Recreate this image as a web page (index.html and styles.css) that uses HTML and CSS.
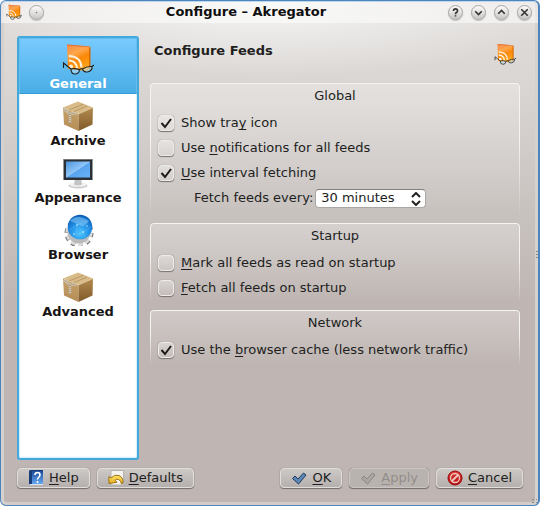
FILE: index.html
```html
<!DOCTYPE html>
<html lang="en">
<head>
<meta charset="utf-8">
<title>Configure – Akregator</title>
<link rel="stylesheet" href="styles.css">
</head>
<body>
<svg class="defs" aria-hidden="true">
  <defs>
    <linearGradient id="orange" x1="0" y1="0" x2="0.4" y2="1"><stop offset="0" stop-color="#f58a45"/><stop offset=".4" stop-color="#ffa64c"/><stop offset=".65" stop-color="#fa8806"/><stop offset="1" stop-color="#ffa31e"/></linearGradient>
    <linearGradient id="boxl" x1="0" y1="0" x2="0" y2="1"><stop offset="0" stop-color="#c6a26b"/><stop offset="1" stop-color="#b48d55"/></linearGradient>
    <linearGradient id="boxr" x1="0" y1="0" x2="0" y2="1"><stop offset="0" stop-color="#b28a50"/><stop offset="1" stop-color="#805a28"/></linearGradient>
    <linearGradient id="screen" x1="0" y1="0" x2="1" y2="1"><stop offset="0" stop-color="#4d96dc"/><stop offset=".5" stop-color="#8fc6f8"/><stop offset=".52" stop-color="#58a4ee"/><stop offset="1" stop-color="#69b0fa"/></linearGradient>
    <radialGradient id="globe" cx=".5" cy=".75" r=".75"><stop offset="0" stop-color="#50c4ff"/><stop offset=".5" stop-color="#2393e8"/><stop offset="1" stop-color="#0b5cb4"/></radialGradient>
    <linearGradient id="book" x1="0" y1="0" x2="0" y2="1"><stop offset="0" stop-color="#1c4c9c"/><stop offset="1" stop-color="#66a8f2"/></linearGradient>
    <linearGradient id="gold" x1="0" y1="0" x2="0" y2="1"><stop offset="0" stop-color="#ffe868"/><stop offset="1" stop-color="#e8a91c"/></linearGradient>
    <linearGradient id="red" x1="0" y1="0" x2="0" y2="1"><stop offset="0" stop-color="#e23a32"/><stop offset="1" stop-color="#b80d0d"/></linearGradient>
    <symbol id="feed" viewBox="0 0 32 32">
      <path d="M5 1.500 28 3.500v22.500L24 28 6 26Z" fill="url(#orange)"/>
      <path d="M5 1.500 28 3.500l-1 .8L5.500 2.500Z" fill="#e0703a"/>
      <path d="M27 4.500 28.500 4v22l-1.500.8Z" fill="#d76a05"/>
      <path d="M7 17.500q7.500.5 8 8M7 13q12 .5 12.500 11.500" fill="none" stroke="#fff1df" stroke-width="2"/>
      <circle cx="9" cy="23.500" r="2" fill="#fff1df"/>
      <g fill="#bce2f5" fill-opacity=".55" stroke="#22211f" stroke-width="1.100">
        <path d="M9 26q4.500-1 8.500.8-.5 4.200-4.500 4.200Q9 31 9 26ZM20.500 26q4.500-3 9.500-2.500.5 4.500-4.500 5.500-4 .3-5-3Z"/>
        <path d="M17.500 26.800q1-1.500 3-.8M9 26 1.500 20v5M30 23.500l2-1.500" fill="none"/>
      </g>
    </symbol>
    <symbol id="carton" viewBox="0 0 32 32">
      <path d="m1 7.500 15-6 15 6-14.500 6.500Z" fill="#d8bb88"/>
      <path d="m1 7.500 15.500 6.500v17L2 24.500Z" fill="url(#boxl)"/>
      <path d="m31 7.500-14.500 6.500v17L30.500 24.500Z" fill="url(#boxr)"/>
      <path d="m6.500 10.200 15-6M11 12l14-6" stroke="#b08f5c" stroke-width=".8" fill="none"/>
      <path d="M1.500 8.500 8 14l7-1M8 14v9" stroke="#d2c7b3" stroke-width="2.300" fill="none"/>
      <path d="M1.500 8.500 8 14l7-1M8 14v9" stroke="#8c806c" stroke-width="1" stroke-dasharray="1 1" fill="none"/>
      <path d="m1 7.500 15.500 6.500L31 7.500" stroke="#e4cb9c" stroke-width=".7" fill="none"/>
    </symbol>
    <symbol id="monitor" viewBox="0 0 32 32">
      <ellipse cx="16" cy="28.500" rx="9.500" ry="3" fill="#c9c9c9"/><ellipse cx="16" cy="27.500" rx="8.500" ry="2.300" fill="#f1f1f1"/>
      <path d="M13 22h6l1 5.500q-4 2-8 0Z" fill="#c4c4c4"/>
      <path d="M1.500 2h29v21h-29Z" fill="#2b3036"/><path d="M2 2.500h28" stroke="#777"/>
      <path d="M4 4.500h24v16H4Z" fill="url(#screen)"/>
    </symbol>
    <symbol id="world" viewBox="0 0 32 32">
      <circle cx="17" cy="19" r="12.500" fill="none" stroke="#77797a" stroke-width="4" stroke-dasharray="4 3.850"/>
      <circle cx="17" cy="18.500" r="11.500" fill="none" stroke="#dcdcdc" stroke-width="4" stroke-dasharray="4.200 3.020"/>
      <circle cx="17" cy="18" r="11.500" fill="#b9bbbc"/>
      <circle cx="18" cy="13" r="12.300" fill="url(#globe)"/>
      <path d="M8 7q7-8 19 0-4 6-8 5-5-3-11-5Z" fill="#8bcdfa" fill-opacity=".55"/>
      <path d="m7 16 8-5 6 7 8-5M15 11l-1 11 7-4 2 5M15 11l9-4" fill="none" stroke="#9ee2ff" stroke-opacity=".35" stroke-width=".6"/>
      <g fill="#d7f5ff"><circle cx="15" cy="11" r=".8"/><circle cx="21" cy="18" r=".8"/><circle cx="12" cy="20" r=".7"/><circle cx="25" cy="12" r=".7"/></g>
    </symbol>
    <symbol id="tick" viewBox="0 0 16 16"><path d="m1.500 8.500 2.500-2.500 3 3 5.500-6 2.500 2-7.500 9Z" stroke-linejoin="round"/></symbol>
    <symbol id="check" viewBox="0 0 16 16"><path d="m3.500 8 3.500 4 6-8" fill="none" stroke="#1c1a19" stroke-width="2"/></symbol>
  </defs>
</svg>

<main class="window">
  <header class="titlebar">
    <svg class="app-icon"><use href="#feed"/></svg>
    <button class="orb" aria-label="On all desktops"><svg viewBox="0 0 16 16"><circle cx="8" cy="8" r="1"/></svg></button>
    <h1>Configure – Akregator</h1>
    <div class="controls">
      <button class="orb" aria-label="Help"><svg viewBox="0 0 16 16"><path d="M5.500 6q0-2.500 2.500-2.500T10.500 6q0 1-1.500 2-1 .7-1 2M8 11.500V13"/></svg></button>
      <button class="orb" aria-label="Minimize"><svg viewBox="0 0 16 16"><path d="m4 6.500 4 4 4-4"/></svg></button>
      <button class="orb" aria-label="Maximize"><svg viewBox="0 0 16 16"><path d="m4 9.500 4-4 4 4"/></svg></button>
      <button class="orb" aria-label="Close"><svg viewBox="0 0 16 16"><path d="m4 4 8 8m0-8-8 8"/></svg></button>
    </div>
  </header>

  <div class="content">
    <nav class="pages" aria-label="Settings pages">
      <a href="#general" class="page current" aria-current="page"><svg><use href="#feed"/></svg>General</a>
      <a href="#archive" class="page"><svg><use href="#carton"/></svg>Archive</a>
      <a href="#appearance" class="page"><svg><use href="#monitor"/></svg>Appearance</a>
      <a href="#browser" class="page"><svg><use href="#world"/></svg>Browser</a>
      <a href="#advanced" class="page"><svg><use href="#carton"/></svg>Advanced</a>
    </nav>

    <section class="settings">
      <div class="heading"><h2>Configure Feeds</h2><svg><use href="#feed"/></svg></div>
      <section class="group global">
        <h3>Global</h3>
        <label class="option"><span class="box"><input type="checkbox" checked><svg><use href="#check"/></svg></span><span>Show tra<u>y</u> icon</span></label>
        <label class="option"><span class="box"><input type="checkbox"><svg><use href="#check"/></svg></span><span>Use <u>n</u>otifications for all feeds</span></label>
        <label class="option"><span class="box"><input type="checkbox" checked><svg><use href="#check"/></svg></span><span><u>U</u>se interval fetching</span></label>
        <div class="interval">
          <label for="every">Fetch feeds every:</label>
          <span class="combo"><select id="every"><option>30 minutes</option></select><svg viewBox="0 0 10 14"><path d="m1 5 4-4 4 4M1 9l4 4 4-4"/></svg></span>
        </div>
      </section>
      <section class="group startup">
        <h3>Startup</h3>
        <label class="option"><span class="box"><input type="checkbox"><svg><use href="#check"/></svg></span><span><u>M</u>ark all feeds as read on startup</span></label>
        <label class="option"><span class="box"><input type="checkbox"><svg><use href="#check"/></svg></span><span><u>F</u>etch all feeds on startup</span></label>
      </section>
      <section class="group network">
        <h3>Network</h3>
        <label class="option"><span class="box"><input type="checkbox" checked><svg><use href="#check"/></svg></span><span>Use the <u>b</u>rowser cache (less network traffic)</span></label>
      </section>
    </section>
  </div>

  <footer class="actions">
    <button class="action"><svg viewBox="0 0 16 16"><path d="M1 1q0-1 2-1h12v15H3q-2 0-2-1Z" fill="#173c78"/><path d="M4 1h11v13H4Z" fill="url(#book)"/><path d="M1.500 14.500H15" stroke="#dce7f4"/><path d="M7 5q0-2.500 2.500-2.500T12 5q0 1.200-1.500 2.500-1 .8-1 2M9.500 11v2" fill="none" stroke="#fff" stroke-width="1.600"/></svg><span><u>H</u>elp</span></button>
    <button class="action"><svg viewBox="0 0 16 16"><path d="M3 .5h12.500V15H3Z" fill="#f4f3f0" stroke="#b4b0ac"/><path d="M.8 6.500 3 8q3.500-4 8-2.500 4.500 2 4 7.500l-1.500 1q-.5-3.500-3-4.500-2-.7-3.500.8l2 2L1 13.500Z" fill="url(#gold)" stroke="#94680a" stroke-width=".9" stroke-linejoin="round"/></svg><span><u>D</u>efaults</span></button>
    <button class="action first-right"><svg class="blue"><use href="#tick"/></svg><span><u>O</u>K</span></button>
    <button class="action" disabled><svg class="gray"><use href="#tick"/></svg><span><u>A</u>pply</span></button>
    <button class="action"><svg viewBox="0 0 16 16"><circle cx="8" cy="8" r="7" fill="url(#red)" stroke="#970909"/><circle cx="8" cy="8" r="4.500" fill="none" stroke="#eccbc7" stroke-width="1.300"/><path d="m5 11 6-6" stroke="#eccbc7" stroke-width="1.800"/></svg><span><u>C</u>ancel</span></button>
  </footer>
  <span class="grip side"></span>
  <span class="grip corner"></span>
</main>
</body>
</html>
```
FILE: styles.css
```css
* { box-sizing: border-box; }
html { background: #fff; }
body {
  margin: 0;
  font: 13px/16px "DejaVu Sans", sans-serif;
  color: #211e1d;
}
h1, h2, h3 { margin: 0; font-size: 13px; line-height: 16px; }
button, select { font: inherit; color: inherit; margin: 0; }
svg { display: block; flex: none; }
u { text-decoration-thickness: 1px; text-underline-offset: 2px; text-decoration-skip-ink: none; }
.defs { position: absolute; width: 0; height: 0; }

.window {
  position: relative;
  display: flex;
  flex-direction: column;
  min-height: 100vh;
  padding: 0 13px 17px;
  border: solid #4d84bd;
  border-width: 1px 2px 1px 1px;
  border-radius: 6px;
  box-shadow: inset 0 1px #94bce2, inset 3px 0 #d5d1cf, inset -3px 0 #d5d1cf, inset 0 -3px #d2cdcb;
  background:
    radial-gradient(ellipse 300px 76px at 50% 0, #f5f5f4 0, #f5f5f400 100%),
    linear-gradient(#e0dddb 0, #dad6d3 80px, #c7c1be 220px, #bfb6b3 300px);
}

.titlebar {
  display: flex;
  align-items: center;
  height: 22px;
  margin: 0 -13px;
  padding: 0 6px 0 5px;
  background: linear-gradient(#ffffff66, #ffffff88);
  border-radius: 5px 5px 0 0;
}
.titlebar h1 { flex: 1; text-align: center; color: #0f0e0e; }
.app-icon { width: 16px; height: 16px; margin-right: 7px; }
.orb {
  width: 15px;
  height: 15px;
  padding: 0;
  border: 1px solid #a9a6a4;
  border-radius: 50%;
  background: linear-gradient(#fbfbfb, #c9c7c5);
  box-shadow: 0 1px 1px #96939188;
}
.orb svg { width: 13px; height: 13px; fill: none; stroke: #373432; stroke-width: 2; }
.orb circle { fill: #777; stroke: none; }
.controls { display: flex; gap: 8px; }

.content { display: flex; flex: 1; gap: 11px; padding: 13px 5px 8px 3px; }
.pages {
  width: 122px;
  border: 2px solid #43a8dc;
  border-radius: 3px;
  background: #fff;
  box-shadow: inset 0 0 2px #6cc6f2;
}
.page {
  display: flex;
  flex-direction: column;
  align-items: center;
  height: 57px;
  padding-top: 5px;
  color: #171514;
  font-weight: bold;
  text-decoration: none;
}
.page svg { width: 32px; height: 32px; margin-bottom: 1px; }
.page.current {
  height: 56px;
  margin-bottom: 1px;
  color: #fff;
  border: 1px solid #69bdec;
  border-bottom-color: #359bd3;
  padding-top: 4px;
  background: linear-gradient(#78cafe, #49ade6);
}

.settings { flex: 1; min-width: 0; }
.heading { display: flex; justify-content: space-between; align-items: flex-start; height: 47px; padding: 7px 4px 0; }
.heading svg { width: 22px; height: 22px; }
.group { position: relative; padding: 5px 8px 0; margin-bottom: 6px; border-radius: 4px; background: linear-gradient(#ffffff44, #ffffff00 95%); }
.group::before {
  content: "";
  position: absolute;
  inset: 0;
  border: 1px solid #f6f4f3;
  border-bottom: 0;
  border-radius: 4px 4px 0 0;
  box-shadow: -1px 0 #aaa39f66, 1px 0 #aaa39f88;
  mask-image: linear-gradient(#000 40%, transparent);
  pointer-events: none;
}
.group h3 { font-weight: normal; text-align: center; margin-bottom: 6px; }
.global { padding-bottom: 6px; }
.startup { padding-bottom: 4px; }
.network { padding-bottom: 5px; }
.option { display: flex; align-items: center; gap: 7px; height: 25px; position: relative; }
.box { position: relative; width: 16px; height: 16px; }
.box input {
  appearance: none;
  display: block;
  width: 16px;
  height: 16px;
  margin: 0;
  border: 1px solid #eeeceb;
  border-radius: 4px;
  background: linear-gradient(#ffffff55, #ffffff11);
  box-shadow: 0 1px 1px #777270, 0 0 1px #777270;
}
.box svg { position: absolute; inset: 0; width: 16px; height: 16px; display: none; pointer-events: none; }
.box input:checked + svg { display: block; }
.interval { display: flex; align-items: center; gap: 2px; height: 26px; padding-left: 36px; position: relative; }
.combo { position: relative; }
.combo select {
  appearance: none;
  display: block;
  width: 111px;
  height: 19px;
  padding: 0 24px 0 5px;
  border: 1px solid #aaa6a4;
  border-top-color: #827e7c;
  border-radius: 4px;
  background: #fff;
}
.combo svg { position: absolute; right: 5px; top: 3px; width: 10px; height: 14px; fill: none; stroke: #24211f; stroke-width: 2; pointer-events: none; }

.actions { display: flex; gap: 7px; padding: 0 2px 0 3px; }
.action {
  display: flex;
  align-items: center;
  gap: 5px;
  height: 20px;
  padding: 0 10px;
  border: 1px solid #e1dddb;
  border-radius: 4px;
  background: linear-gradient(#cdc9c6, #b5b0ad);
  box-shadow: 0 1px 1px #746e6b, 0 0 1px #746e6b;
}
.action svg { width: 16px; height: 16px; }
.first-right { margin-left: auto; }
.action:disabled { color: #938d8a; border-color: #cbc6c3; background: #b9b3b0; }
.blue { fill: #5d86b4; stroke: #213d60; }
.gray { fill: #aaa6a3; stroke: #8b8683; }

.grip { position: absolute; background: radial-gradient(circle, #8d8987 1px, transparent 1px) 0 0 / 4px 3px; }
.side { right: 0; top: 249px; width: 3px; height: 9px; }
.corner { right: 1px; bottom: 1px; width: 6px; height: 6px; }
```
